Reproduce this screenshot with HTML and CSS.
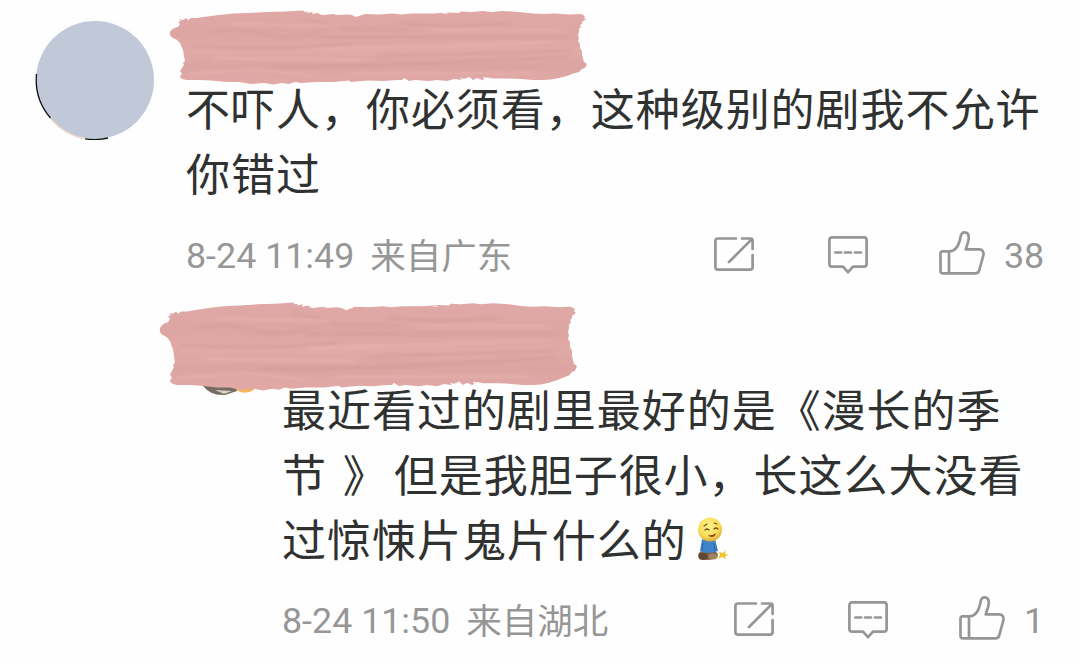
FILE: index.html
```html
<!DOCTYPE html>
<html lang="zh-CN">
<head>
<meta charset="utf-8">
<title>评论</title>
<link rel="stylesheet" href="styles.css">
</head>
<body>
<svg class="defs" width="0" height="0" aria-hidden="true">
  <defs>
    <linearGradient id="paint" x1="0" y1="0" x2="0" y2="1">
      <stop offset="0" stop-color="#e0a8a6"/><stop offset=".35" stop-color="#dda6a2"/>
      <stop offset=".55" stop-color="#e0aaa7"/><stop offset=".75" stop-color="#dba4a1"/><stop offset="1" stop-color="#e2a9a7"/>
    </linearGradient>
    <radialGradient id="face" cx=".45" cy=".35" r=".65">
      <stop offset="0" stop-color="#fff48e"/><stop offset=".7" stop-color="#f7dc55"/><stop offset="1" stop-color="#d9a93e"/>
    </radialGradient>
    <filter id="soften" x="-5%" y="-20%" width="110%" height="140%"><feGaussianBlur stdDeviation="3 1"/></filter>
  </defs>
  <symbol id="brush" viewBox="0 0 418 75" preserveAspectRatio="none">
    <path fill="url(#paint)" d="M4 28Q0 26 1 22 3 18 9 17L11 14 9 12 12 11 10 9 14 10 17 8 19 10 22 8 28 8 38 6.500 50 5 64 3.500 80 3 98 2 116 1.500 134 .5 136 2 139 1.500 138 3 144 2 143 4 149 3 153 5 165 4 167 5 178 4.500 183 5 187 7 193 5 196 4 210 4.500 224 3.500 232 4.500 243 3.500 264 3.500 280 2.500 290 3 292 1.500 302 2 314 1 322 2 334 1 350 2 364 3.500 374 4 386 3.500 400 4.500 412 4 416 6 415 8 417 9 413 12 413 14 411 15 412 17 410 19 410 22 409 25 410 28 409 31 411 34 411 38 413 41 413 45 414 49 415 52 418 54 416 58 413 59 410 62 403 64 398 66 390 68 382 69.500 374 70 364 70 352 69 340 68.500 325 68.500 318 68 313 70 308 68 304 70 300 67 296 69 291 68 293 70 285 69 278 71 268 70 260 71 246 70 240 71 235 68 233 70 228 70 214 71 200 70.500 182 72 180 70.500 165 72 148 72 132 73 126 72 120 74 113 73 104 74.500 95 73 82 74 70 72 58 72 42 70.500 30 70 18 70Q11 69 11 66L13 64 11 61 13 58 15 55 14 53 16 51 15 46 14 40Q12 36 11 33 8 29 4 28Z"/>
    <g fill="none" stroke-width="3" stroke-linecap="round" opacity=".25" filter="url(#soften)">
      <path stroke="#cc8f8c" d="M40 22q30-5 55 2t58-3M134 9l45 10 60 1M150 27h250M22 36q80 5 160-2M210 46l190-5M105 57l112-2 180-8M230 13q50 5 110 0"/>
      <path stroke="#f0c0bc" d="M60 14l110 2M150 39l120-3 115-4M45 48l150 2M180 63h190M18 64l70-4 55 5M260 20h130"/>
    </g>
    <path fill="#fff" opacity=".85" d="M149 5l9-1-2 1zM276 3l4 1-7 0zM294 69l8-2-3 2zM314 67l9 1-8 1z"/>
  </symbol>
  <symbol id="share" viewBox="0 0 40 34">
    <path d="M22 1.500H4A2.600 2.600 0 0 0 1.400 4.100V30A2.600 2.600 0 0 0 4 32.600H36A2.600 2.600 0 0 0 38.600 30V18.200M28 1.500H36.500Q38.600 1.500 38.600 3.600V12M15 25L37.600 2.400"/>
  </symbol>
  <symbol id="comment" viewBox="0 0 40 38">
    <path d="M4 1.400H36A2.600 2.600 0 0 1 38.600 4V28A2.600 2.600 0 0 1 36 30.600H25L20 36.200 15 30.600H4A2.600 2.600 0 0 1 1.400 28V4A2.600 2.600 0 0 1 4 1.400ZM7.300 16.500H13.300M17 16.500H23M27 16.500H33"/>
  </symbol>
  <symbol id="like" viewBox="0 0 46 44">
    <path d="M10 20.400H3.600A2 2 0 0 0 1.500 22.500V40A2.300 2.300 0 0 0 3.800 42.300H36.500C38.500 42.300 39.600 41.400 40.200 39.500L44.300 24.500C45.100 21.300 43.600 18.400 40.200 18.400H26.700C27.700 14.500 30 10.500 29.800 6.500 29.700 3.200 27.800 1.400 25.600 1.400 23 1.400 22.100 3 21.600 5.800 20.200 13.600 17 20.400 10 20.400V42"/>
  </symbol>
</svg>

<main class="thread">
  <article class="comment">
    <div class="avatar"><svg viewBox="0 0 120 120"><circle cx="60" cy="60" r="59" fill="#c1c9d9"/><path class="rim" d="M1.500 54A59 59 0 0 0 15.500 98"/><path class="rim" d="M50 118.800A59 59 0 0 0 73 118"/><path class="rim warm" d="M16 99A59 59 0 0 0 49 118.600"/></svg></div>
    <div class="body">
      <svg class="brush"><use href="#brush"/></svg>
      <p class="text">不吓人，你必须看，这种级别的剧我不允许<br>你错过</p>
      <footer class="meta">
        <span class="time">8-24 11:49</span><span class="place">来自广东</span>
        <div class="actions">
          <svg class="icon share"><use href="#share"/></svg>
          <svg class="icon talk"><use href="#comment"/></svg>
          <svg class="icon like"><use href="#like"/></svg>
          <span class="count">38</span>
        </div>
      </footer>
    </div>
  </article>

  <article class="reply">
    <div class="cover">
      <svg class="peek" viewBox="0 0 60 12"><path fill="#776a60" d="M2 0Q10 10 24 9L36 5V0Z"/><path fill="#d9d2c4" d="M14 4l17 1-8 3z"/><path fill="#f4b45c" d="M32 0Q40 11 53 4V0Z"/></svg>
      <svg class="brush tall"><use href="#brush"/></svg>
    </div>
    <p class="text">最近看过的剧里最好的是《漫长的季<br>节<span class="close"> 》</span>但是我胆子很小，长这么大没看<br>过惊悚片鬼片什么的<svg class="emoji" viewBox="0 0 32 44">
      <ellipse cx="11" cy="38" rx="10" ry="5" fill="#826044"/><ellipse cx="6" cy="39.500" rx="4.500" ry="3.500" fill="#5f4533"/><ellipse cx="16" cy="39.500" rx="4.500" ry="3" fill="#a38462"/>
      <path fill="#3f83c8" d="M5 22Q12 25 18 22L21 34Q12 38 3 34Z"/><path fill="none" stroke="#2665a4" d="M6 26l-1 8M17 26l1 8"/>
      <circle cx="13" cy="12.500" r="12" fill="url(#face)"/>
      <path fill="none" stroke="#76501a" stroke-width="1.200" stroke-linecap="round" d="M8 13q2-2 4 0M17 12q2-2 4 0M7 9l3-2M17 6l3 1"/>
      <path fill="#8d3d20" d="M11 18q5 1 8-2-1 4-4 4-3 0-4-2z"/>
      <path fill="#efc52c" d="M22 35l4 1 3-3-1 4 4 1-4 1 1 3-4-2-4 2 2-4z"/>
    </svg></p>
    <footer class="meta">
      <span class="time">8-24 11:50</span><span class="place">来自湖北</span>
      <div class="actions">
        <svg class="icon share"><use href="#share"/></svg>
        <svg class="icon talk"><use href="#comment"/></svg>
        <svg class="icon like"><use href="#like"/></svg>
        <span class="count single">1</span>
      </div>
    </footer>
  </article>
</main>
</body>
</html>
```
FILE: styles.css
```css
* { box-sizing: border-box; }
body {
  margin: 0;
  background: #fefefe;
  color: #303131;
  font-family: Roboto, "Noto Sans CJK SC", sans-serif;
}
.defs { position: absolute; }
.thread { width: 1080px; height: 664px; overflow: hidden; }
.comment { display: flex; height: 302px; padding: 10px 0 0 35px; }
.avatar { width: 120px; height: 120px; margin-top: 10px; flex: none; }
.avatar svg { display: block; width: 120px; height: 120px; }
.rim { fill: none; stroke: #101010; stroke-width: 1.3; }
.rim.warm { stroke: #ecd6c8; }
.body { margin-left: 31px; flex: 1; }
.brush { display: block; width: 418px; height: 75px; margin-left: -17px; }
.brush.tall { position: relative; height: 89px; margin-left: 0; }
.text {
  margin: 0;
  font-family: "Noto Sans CJK SC", sans-serif;
  font-size: 44px;
  font-weight: 400;
  line-height: 65px;
  letter-spacing: 0.97px;
  white-space: nowrap;
}
.body .text { margin-top: -10px; }
.close { margin-left: 5px; margin-right: 6px; }
.meta {
  display: flex;
  align-items: center;
  height: 50px;
  margin-top: 25px;
  font-size: 35.8px;
  line-height: 50px;
  color: #969696;
  white-space: nowrap;
}
.time { padding-top: 2px; }
.place { margin-left: 16px; padding-top: 4px; font-size: 35.5px; }
.actions { display: flex; align-items: center; margin-left: auto; padding-right: 35px; }
.icon { display: block; flex: none; fill: none; stroke: #969696; stroke-width: 2.7; stroke-linecap: round; stroke-linejoin: round; }
.share { width: 40px; height: 34px; margin-bottom: 2px; }
.talk { width: 40px; height: 38px; margin-left: 74px; }
.like { width: 46px; height: 44px; margin-left: 71px; margin-bottom: 4px; }
.count { width: 41px; margin-left: 19px; padding-top: 2px; }
.count.single { width: 21px; }
.reply { padding-left: 282px; }
.cover { position: relative; width: 418px; height: 89px; margin-left: -123px; }
.peek { position: absolute; left: 42px; top: 84px; width: 60px; height: 12px; }
.reply .text { position: relative; margin-top: -15px; }
.reply .meta { margin-top: 24px; }
.emoji { width: 32px; height: 44px; margin-left: 10px; vertical-align: -4px; }
```
